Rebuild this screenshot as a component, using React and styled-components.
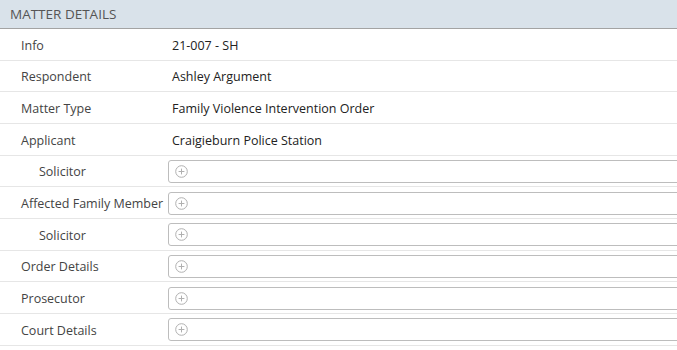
import styled, { createGlobalStyle } from "styled-components";

const GlobalStyle = createGlobalStyle`
  html, body {
    margin: 0;
    padding: 0;
    background: #fff;
  }
  body {
    font-family: "Open Sans", "Noto Sans", sans-serif;
    color: #333;
  }
`;

const rows = [
  { label: "Info", value: "21-007 - SH" },
  { label: "Respondent", value: "Ashley Argument" },
  { label: "Matter Type", value: "Family Violence Intervention Order" },
  { label: "Applicant", value: "Craigieburn Police Station" },
  { label: "Solicitor", indent: true },
  { label: "Affected Family Member" },
  { label: "Solicitor", indent: true },
  { label: "Order Details" },
  { label: "Prosecutor" },
  { label: "Court Details" },
];

const PlusIcon = () => (
  <svg width="13" height="13" viewBox="0 0 13 13">
    <circle cx="6.5" cy="6.5" r="5.8" fill="none" stroke="#b0b0b0" strokeWidth="1" />
    <path d="M6.5 3.6v5.8M3.6 6.5h5.8" stroke="#b0b0b0" strokeWidth="1" />
  </svg>
);

export default function App() {
  return (
    <>
      <GlobalStyle />
      <Panel>
        <Header>MATTER DETAILS</Header>
        {rows.map((r, i) => (
          <Row key={i}>
            <Label $indent={r.indent}>{r.label}</Label>
            {r.value ? (
              <Value>{r.value}</Value>
            ) : (
              <Picker>
                <PlusIcon />
              </Picker>
            )}
          </Row>
        ))}
      </Panel>
    </>
  );
}

const Panel = styled.div`
  width: 677px;
  display: flex;
  flex-direction: column;
`;

const Header = styled.div`
  height: 28px;
  display: flex;
  align-items: center;
  padding-left: 10px;
  background: #d9e2ea;
  border-bottom: 1px solid #a3a3a3;
  color: #555;
  font-size: 13.5px;
`;

const Row = styled.div`
  height: 30.67px;
  display: grid;
  grid-template-columns: 168px 1fr;
  align-items: center;
  border-bottom: 1px solid #e6e6e6;
  font-size: 12.5px;
`;

const Label = styled.div`
  padding-top: 2px;
  padding-left: ${(p) => (p.$indent ? "39px" : "21px")};
  color: #444;
  white-space: nowrap;
`;

const Value = styled.div`
  padding-top: 2px;
  padding-left: 4px;
  color: #222;
`;

const Picker = styled.div`
  height: 21px;
  margin-top: 1px;
  margin-right: -4px;
  display: flex;
  align-items: center;
  padding-left: 6px;
  border: 1px solid #bdbdbd;
  border-radius: 3px;
`;
